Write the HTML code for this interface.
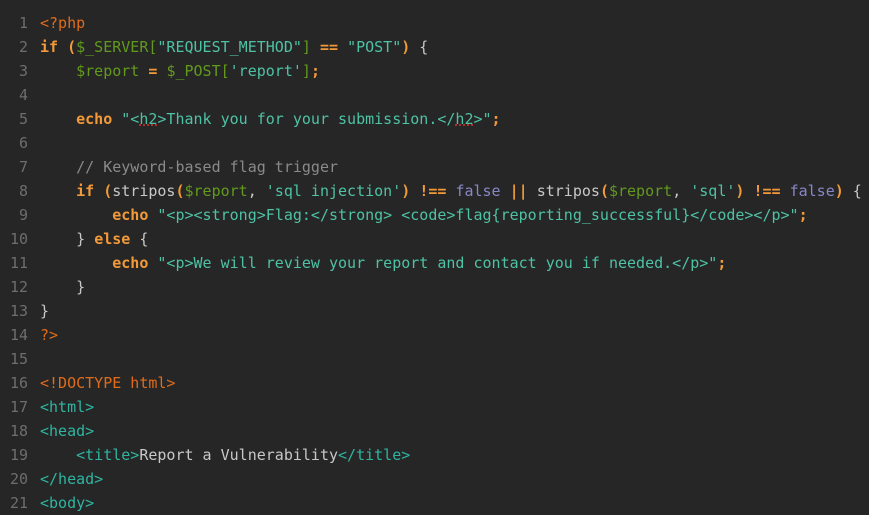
<!DOCTYPE html><html><head><style>
body{margin:0;background:#262626;width:869px;height:506px;overflow:hidden}
pre{margin:0;position:absolute;top:11px;font:15px/24px "DejaVu Sans Mono","Liberation Mono",monospace;color:#c8c8c8}
.n{left:0;width:28px;text-align:right;color:#6e6e6e}
.c{left:40px}
.p{color:#e06c1a}.k{color:#f29a3a;font-weight:bold}.o{color:#f29a3a;font-weight:bold}.v{color:#619a1c}.s{color:#4ec2a4}.f{color:#8787c8}.m{color:#8a8a8a}.t{color:#2eb5a2}
.u{text-decoration:underline dotted #e03030}
</style></head><body>
<pre class="n">1
2
3
4
5
6
7
8
9
10
11
12
13
14
15
16
17
18
19
20
21</pre>
<pre class="c"><span class="p">&lt;?php</span>
<span class="k">if</span> <span class="o">(</span><span class="v">$_SERVER[</span><span class="s">"REQUEST_METHOD"</span><span class="v">]</span> <span class="k">==</span> <span class="s">"POST"</span><span class="o">)</span> {
    <span class="v">$report</span> <span class="k">=</span> <span class="v">$_POST[</span><span class="s">'report'</span><span class="v">]</span><span class="o">;</span>

    <span class="k">echo</span> <span class="s">"&lt;<span class="u">h2</span>&gt;Thank you for your submission.&lt;/<span class="u">h2</span>&gt;"</span><span class="o">;</span>

    <span class="m">// Keyword-based flag trigger</span>
    <span class="k">if</span> <span class="o">(</span>stripos<span class="o">(</span><span class="v">$report</span>, <span class="s">'sql injection'</span><span class="o">)</span> <span class="k">!==</span> <span class="f">false</span> <span class="k">||</span> stripos<span class="o">(</span><span class="v">$report</span>, <span class="s">'sql'</span><span class="o">)</span> <span class="k">!==</span> <span class="f">false</span><span class="o">)</span> {
        <span class="k">echo</span> <span class="s">"&lt;p&gt;&lt;strong&gt;Flag:&lt;/strong&gt; &lt;code&gt;flag{reporting_successful}&lt;/code&gt;&lt;/p&gt;"</span><span class="o">;</span>
    } <span class="k">else</span> {
        <span class="k">echo</span> <span class="s">"&lt;p&gt;We will review your report and contact you if needed.&lt;/p&gt;"</span><span class="o">;</span>
    }
}
<span class="p">?&gt;</span>

<span class="p">&lt;!DOCTYPE html&gt;</span>
<span class="t">&lt;html&gt;</span>
<span class="t">&lt;head&gt;</span>
    <span class="t">&lt;title&gt;</span>Report a Vulnerability<span class="t">&lt;/title&gt;</span>
<span class="t">&lt;/head&gt;</span>
<span class="t">&lt;body&gt;</span></pre>
</body></html>
